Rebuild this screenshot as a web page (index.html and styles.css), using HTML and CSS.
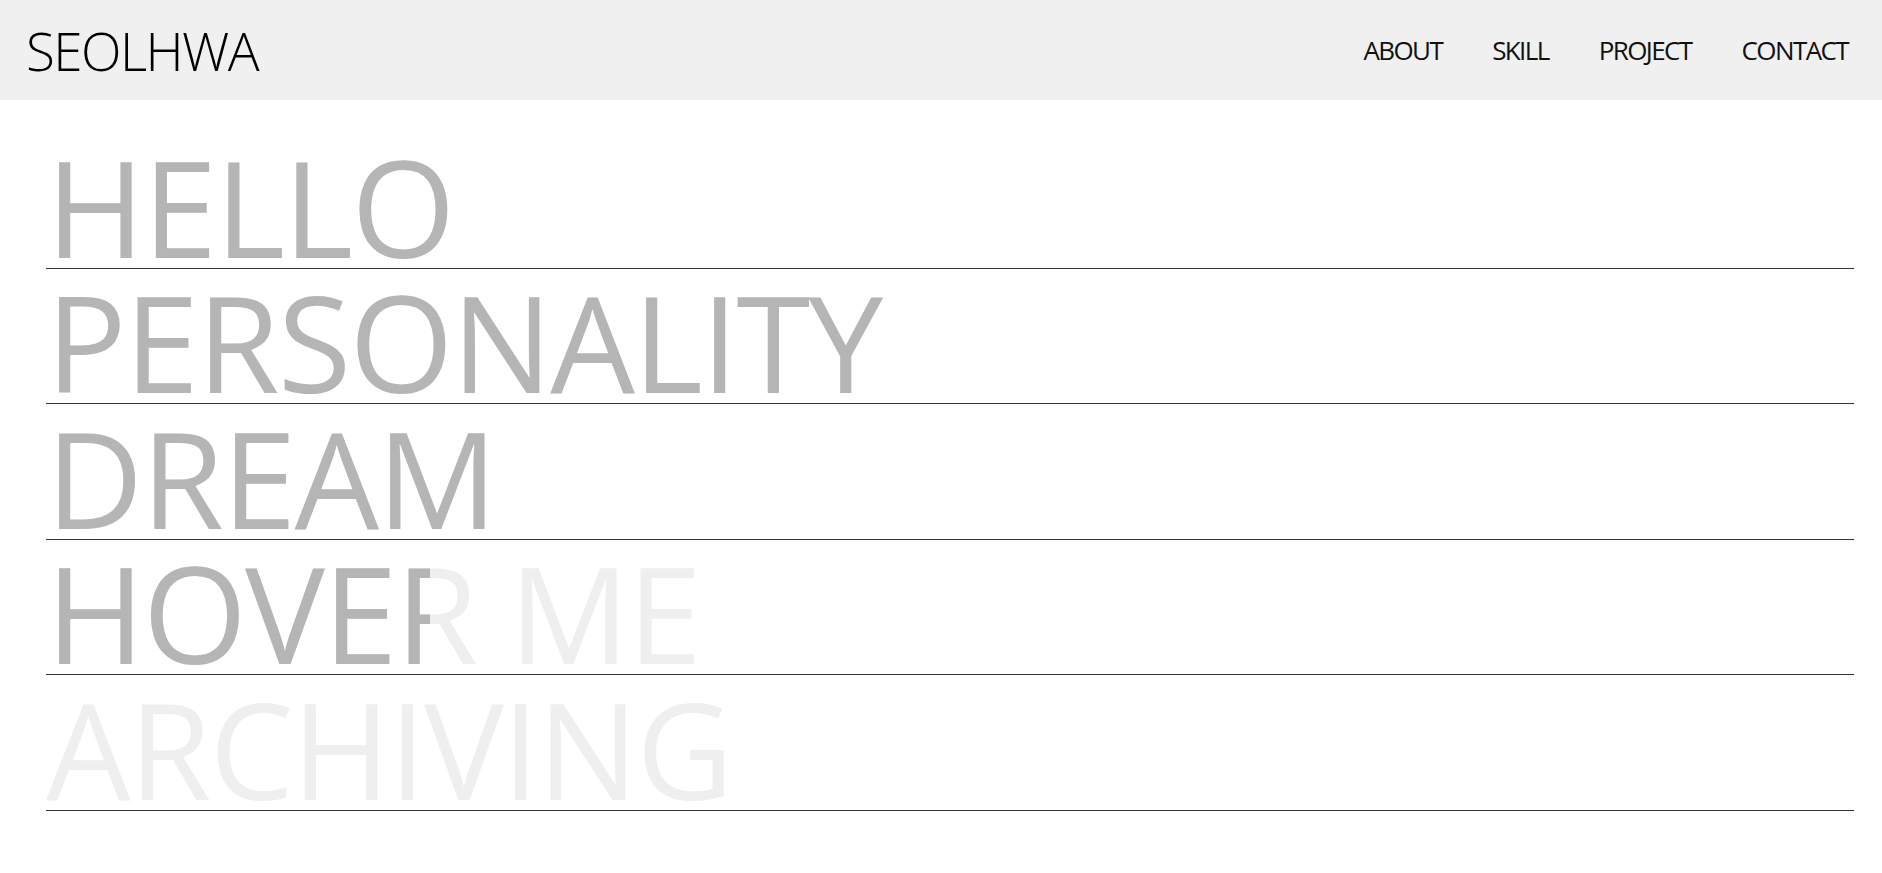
FILE: index.html
```html
<!DOCTYPE html>
<html lang="en">
<head>
<meta charset="utf-8">
<title>SEOLHWA</title>
<link rel="stylesheet" href="styles.css">
</head>
<body>
<header class="header">
  <a class="logo" href="#">SEOLHWA</a>
  <nav class="nav">
    <a href="#">ABOUT</a>
    <a href="#">SKILL</a>
    <a href="#">PROJECT</a>
    <a href="#">CONTACT</a>
  </nav>
</header>
<main class="main">
  <ul class="list">
    <li class="row"><span class="word">HELLO</span></li>
    <li class="row"><span class="word">PERSONALITY</span></li>
    <li class="row"><span class="word">DREAM</span></li>
    <li class="row row-hover">
      <span class="word word-light">HOVER ME</span>
      <span class="word word-fill" style="width:384px" aria-hidden="true">HOVER ME</span>
    </li>
    <li class="row"><span class="word word-light">ARCHIVING</span></li>
  </ul>
</main>
</body>
</html>
```
FILE: styles.css
```css
* { box-sizing: border-box; }
html, body { margin: 0; padding: 0; }
body {
  font-family: "Open Sans", "Noto Sans", sans-serif;
  background: #ffffff;
  color: #000;
}
a { color: inherit; text-decoration: none; }

.header {
  height: 100px;
  background: #f0f0f0;
  display: flex;
  align-items: center;
  justify-content: space-between;
  padding: 0 34px 0 26px;
}
.logo {
  font-size: 53px;
  font-weight: 350;
  line-height: 1;
  letter-spacing: -1.6px;
  color: #000;
}
.nav {
  display: flex;
  gap: 50px;
}
.nav a {
  font-size: 26px;
  font-weight: 400;
  letter-spacing: -1.6px;
  color: #111;
}

.main {
  padding: 33px 28px 0 46px;
}
.list {
  list-style: none;
  margin: 0;
  padding: 0;
}
.row {
  position: relative;
  height: 135.5px;
  border-bottom: 1px solid #333;
  display: flex;
  align-items: flex-end;
}
.word {
  font-size: 134px;
  line-height: 1;
  font-weight: 400;
  letter-spacing: -2px;
  color: #b5b5b5;
  white-space: nowrap;
  display: block;
  margin-bottom: -5px;
}
.word-light { color: #efefef; }
.word-fill {
  position: absolute;
  left: 0;
  bottom: 0;
  overflow: hidden;
  color: #b5b5b5;
}
```
